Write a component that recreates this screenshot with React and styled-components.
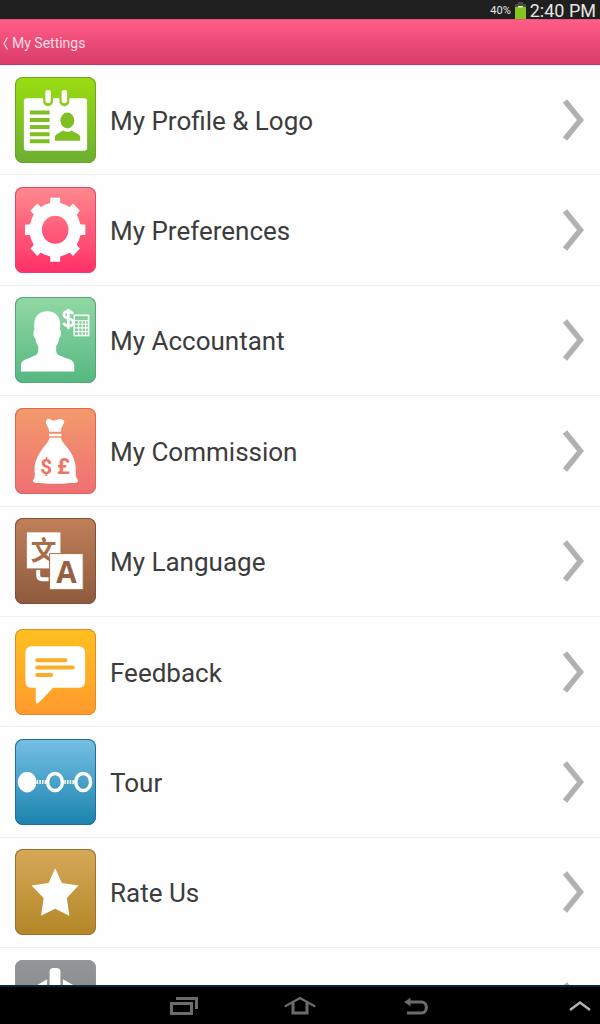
import styled, { createGlobalStyle } from "styled-components";

const GlobalStyle = createGlobalStyle`
  * {
    box-sizing: border-box;
  }
  body {
    margin: 0;
    background: #fefefe;
    font-family: Roboto, "Liberation Sans", sans-serif;
  }
`;

const Screen = styled.div`
  display: flex;
  flex-direction: column;
  height: 100vh;
`;

const StatusBar = styled.div`
  flex: none;
  display: flex;
  align-items: center;
  justify-content: flex-end;
  gap: 4px;
  height: 19px;
  padding: 2px 4px 0 0;
  background: #1f1f1f;
  color: #e6e6e6;
`;

const BatteryText = styled.span`
  font-size: 11px;
`;

const Clock = styled.time`
  font-size: 18px;
  line-height: 18px;
`;

const Header = styled.header`
  flex: none;
  display: flex;
  align-items: center;
  height: 46px;
  border-top: 1px solid #e0567c;
  border-bottom: 1px solid #c9375f;
  background: linear-gradient(#ff5d88, #d83c67);
`;

const BackButton = styled.button`
  display: flex;
  align-items: center;
  gap: 4px;
  padding: 4px 3px 2px;
  border: none;
  background: transparent;
  color: #ffdbe6;
  font-family: inherit;
  font-size: 14px;
  cursor: pointer;
`;

const List = styled.ul`
  flex: 1;
  display: flex;
  flex-direction: column;
  min-height: 0;
  margin: 0;
  padding: 0;
  list-style: none;
  overflow-y: auto;
  scrollbar-width: none;
`;

const Item = styled.li`
  flex: 0 0 12%;
  display: flex;
  min-height: 96px;
  border-bottom: 1px solid #f0f0f0;
`;

const RowLink = styled.a`
  flex: 1;
  display: flex;
  align-items: center;
  gap: 14px;
  padding: 0 16px 0 15px;
  color: #3c3c3c;
  text-decoration: none;
`;

const Tile = styled.span`
  flex: none;
  display: flex;
  width: 81px;
  height: 86px;
  border-radius: 8px;
  overflow: hidden;
  background: linear-gradient(${(props) => props.$from}, ${(props) => props.$to});
  box-shadow: inset 0 0 0 1px ${(props) => props.$edge};
`;

const Label = styled.span`
  flex: 1;
  padding-top: 2px;
  font-size: 26px;
  line-height: 32px;
`;

const NavBar = styled.nav`
  flex: none;
  display: grid;
  grid-template-columns: 1fr auto 1fr;
  align-items: center;
  height: 39px;
  padding: 0 4px;
  border-top: 2px solid #0b2536;
  background: #000;
`;

const NavGroup = styled.div`
  grid-column: 2;
  display: flex;
  gap: 84px;
`;

const NavButton = styled.button`
  display: flex;
  justify-content: center;
  width: 32px;
  padding: 0;
  border: none;
  background: transparent;
  color: ${(props) => props.$color || "#6c6c6c"};
  cursor: pointer;
`;

const ExpandButton = styled(NavButton)`
  grid-column: 3;
  justify-self: end;
`;

const Glyph = ({ children }) => (
  <svg width="82" height="87" viewBox="0 0 82 87" aria-hidden="true">
    {children}
  </svg>
);

const ProfileGlyph = () => (
  <Glyph>
    <rect x="9" y="21" width="64" height="53" rx="3" fill="#fff" />
    <path d="M28.5 20v4a5 5 0 0 0 10 0v-4zM45 20v4a5 5 0 0 0 10 0v-4z" fill="#8ccd18" />
    <rect x="30.7" y="12.5" width="5.6" height="13.5" rx="2.5" fill="#fff" />
    <rect x="47.2" y="12.5" width="5.6" height="13.5" rx="2.5" fill="#fff" />
    <path d="M15 35.5h20M15 43h20M15 50h20M15 57.5h20M15 64.5h20" stroke="#7fbf24" strokeWidth="4" />
    <ellipse cx="53" cy="43.500" rx="7" ry="8" fill="#7fbf24" />
    <path d="M40.5 64v-4c0-3 5-4 8-6.5q4.500 3 9 0c3 2.500 8.500 3.500 8.500 6.500v4z" fill="#7fbf24" />
  </Glyph>
);

const GearGlyph = () => (
  <Glyph>
    <g transform="translate(40.7 42.7) scale(1 1.06)">
      {[0, 45, 90, 135, 180, 225, 270, 315].map((angle) => (
        <path key={angle} d="M-7.5-22-5-26v-4.500H5v4.500l2.500 4z" fill="#fff" transform={`rotate(${angle})`} />
      ))}
      <circle r="19.7" fill="none" stroke="#fff" strokeWidth="12.5" />
    </g>
  </Glyph>
);

const AccountantGlyph = () => (
  <Glyph>
    <path
      d="M32.7 14c8 0 13 5 13 13v6c1.5 1 1 7-1 8-.5 4-1.5 6-3 8v5c0 4 4 5 9 7 6 2 9 3 9.3 8V75H6v-6c.3-5 4-6 9-8 5-2 8.500-3 8.500-7v-5c-1.500-2-2.500-4-3-8-2-1-2.500-7-1-8v-6c0-8 5-13 13.200-13z"
      fill="#fff"
    />
    <path
      d="M58.5 16.5c-1-1.800-2.600-2.500-4.500-2.500-2.700 0-4.500 1.300-4.500 3.500 0 5 9.500 2.500 9.500 7.500 0 2.300-2 3.700-4.800 3.700-2.400 0-4.200-1-5.200-3M54 11.500v20"
      fill="none"
      stroke="#fff"
      strokeWidth="2.8"
    />
    <rect x="60" y="18" width="14.5" height="20.5" fill="none" stroke="#fff" strokeWidth="1.6" />
    <path d="M61 23.5h13M61 27h13M61 30.7h13M61 34.5h13M64.5 23v15M68 23v15M71.5 23v15" stroke="#fff" strokeWidth="1.1" />
  </Glyph>
);

const GlyphText = styled.text`
  font-family: ${(props) => props.$font || "Roboto"}, sans-serif;
  font-size: ${(props) => props.$size}px;
  font-weight: 700;
  text-anchor: middle;
  fill: ${(props) => props.$fill};
`;

const MoneyBagGlyph = () => (
  <Glyph>
    <path d="M34.500 23.500c0-4-3-7-3.300-9.500.500-2.500 2-4 3.500-3.500 2 1 3.500 1.700 5 1.500 2.500 0 4-1.700 5.800-1.500 2.500 0 4 1 4.500 2.500-.500 3-3.500 6-3.500 10.500z" fill="#fff" />
    <path d="M34.5 26.7h12.5" stroke="#fff" strokeWidth="2.5" />
    <path
      d="M35 29.5h11.500c1 5 6 8 10 15 3.500 6 5.500 13 5 18-.300 4 0 7 2.500 10.500-1 2.500-4.500 2.500-8 2.300-10 1.200-20 1.200-30 0-3.500.200-7 .200-8-2.300 3-3.500 2-7 1.800-10.500-.400-6 1.500-12 5.500-18 4-7 8.700-10 9.700-15z"
      fill="#fff"
    />
    <GlyphText x="31.500" y="66" $size={21} $fill="#ee7564">$</GlyphText>
    <GlyphText x="49" y="66" $size={22} $fill="#ee7564">£</GlyphText>
  </Glyph>
);

const LanguageGlyph = () => (
  <Glyph>
    <rect x="12" y="14" width="34" height="36.5" fill="#fff" />
    <path d="M23.5 52v5.500q0 4 4 4H34" fill="none" stroke="#fff" strokeWidth="4" />
    <GlyphText x="29" y="42" $font={'"Noto Sans CJK SC"'} $size={26} $fill="#a86c48">文</GlyphText>
    <rect x="35" y="35.5" width="34" height="36.5" fill="#fff" stroke="#a86c48" strokeWidth="1" />
    <GlyphText x="52" y="65" $font={'"Open Sans"'} $size={30} $fill="#99603f">A</GlyphText>
  </Glyph>
);

const FeedbackGlyph = () => (
  <Glyph>
    <path
      d="M17 17h47q7 0 7 7v28q0 7-7 7H38.5L24 74q-3 2-3-1.500V59h-4q-6.500 0-6.500-7V24q0-7 6.500-7z"
      fill="#fff"
    />
    <path d="M22.5 31H51M22.5 38.5H58.5M22.5 46H36.5" stroke="#fdac26" strokeWidth="4" strokeLinecap="round" />
  </Glyph>
);

const TourGlyph = () => (
  <Glyph>
    <ellipse cx="12.3" cy="43" rx="9.5" ry="10.5" fill="#fff" />
    <path d="M22 43h11M50 43h11" stroke="#fff" strokeWidth="4" strokeDasharray="1.5 1.2" />
    <g fill="none" stroke="#fff" strokeWidth="3.5">
      <ellipse cx="40.5" cy="43" rx="7.5" ry="8.7" />
      <ellipse cx="69" cy="43" rx="7.5" ry="8.7" />
    </g>
  </Glyph>
);

const StarGlyph = () => (
  <Glyph>
    <path
      d="M40.7 19 47.5 34 64.3 36.5 52.5 49 55 67 40.7 60 26.3 67 29 49 16.7 36.5 34 34z"
      fill="#fff"
    />
  </Glyph>
);

const MoreGlyph = () => (
  <Glyph>
    <rect x="35" y="7.5" width="11" height="60" rx="4" fill="#fff" />
    <path d="M32.5 19v40L20.5 52V26zM48.5 19v40L61 52V26z" fill="#fff" />
  </Glyph>
);

const Chevron = () => (
  <svg width="22" height="42" viewBox="0 0 22 42" aria-hidden="true">
    <path d="M3 2 18.5 21 3 40" fill="none" stroke="#b1b1b1" strokeWidth="5.5" />
  </svg>
);

const settings = [
  { id: "profile", label: "My Profile & Logo", glyph: ProfileGlyph, from: "#9add10", to: "#6cae32", edge: "#6da523" },
  { id: "preferences", label: "My Preferences", glyph: GearGlyph, from: "#ff8a8e", to: "#ff2f67", edge: "#e8436c" },
  { id: "accountant", label: "My Accountant", glyph: AccountantGlyph, from: "#92d8a4", to: "#55b881", edge: "#55a578" },
  { id: "commission", label: "My Commission", glyph: MoneyBagGlyph, from: "#f39b6b", to: "#ef6f73", edge: "#dd6657" },
  { id: "language", label: "My Language", glyph: LanguageGlyph, from: "#c08058", to: "#8d5a3d", edge: "#82503a" },
  { id: "feedback", label: "Feedback", glyph: FeedbackGlyph, from: "#ffc020", to: "#ff9a2d", edge: "#e08c26" },
  { id: "tour", label: "Tour", glyph: TourGlyph, from: "#76c0e4", to: "#1a83ae", edge: "#216f96" },
  { id: "rate", label: "Rate Us", glyph: StarGlyph, from: "#d6a858", to: "#b38727", edge: "#9c7229" },
  { id: "more", glyph: MoreGlyph, from: "#939598", to: "#808285", edge: "#939598" },
];

const SettingRow = ({ item }) => {
  const Icon = item.glyph;
  return (
    <Item>
      <RowLink href={`#${item.id}`} aria-label={item.label ? undefined : "More"}>
        <Tile $from={item.from} $to={item.to} $edge={item.edge}>
          <Icon />
        </Tile>
        <Label>{item.label}</Label>
        <Chevron />
      </RowLink>
    </Item>
  );
};

const App = () => {
  return (
    <Screen>
      <GlobalStyle />
      <StatusBar>
        <BatteryText>40%</BatteryText>
        <svg width="11" height="17" viewBox="0 0 11 17" aria-hidden="true">
          <path d="M3 0h5v2h3v4H0V2h3z" fill="#4a4a4a" />
          <path d="M0 5h3V4h5v1h3v12H0z" fill="#84c41c" />
          <path d="M3 4h5v1.5H3z" fill="#e4f3c4" />
        </svg>
        <Clock>2:40 PM</Clock>
      </StatusBar>
      <Header>
        <BackButton type="button">
          <svg width="5" height="13" viewBox="0 0 5 13" aria-hidden="true">
            <path d="M4.5.5 1 6.500l3.500 6" fill="none" stroke="currentColor" strokeWidth="1.2" />
          </svg>
          My Settings
        </BackButton>
      </Header>
      <List>
        {settings.map((item) => (
          <SettingRow key={item.id} item={item} />
        ))}
      </List>
      <NavBar>
        <NavGroup>
          <NavButton type="button" aria-label="Recent apps">
            <svg width="30" height="20" viewBox="0 0 30 20" fill="none" stroke="currentColor" strokeWidth="3">
              <path d="M2.500 7.500h20v10h-20z" />
              <path d="M7 2.500h20.500v10.500" />
            </svg>
          </NavButton>
          <NavButton type="button" aria-label="Home">
            <svg width="32" height="20" viewBox="0 0 32 20" fill="none" stroke="currentColor" strokeWidth="3">
              <path d="M.8 10.500 16 2l15.200 8.500" strokeWidth="2.4" />
              <path d="M9 6.500V17h14V6.500" />
            </svg>
          </NavButton>
          <NavButton type="button" aria-label="Back">
            <svg width="26" height="20" viewBox="0 0 26 20" fill="none" stroke="currentColor" strokeWidth="3">
              <path d="M6 6h12.500c6.500 0 6.500 11 0 11H4" />
              <path d="M1 6 7.500 1.800v8.400z" fill="currentColor" stroke="none" />
            </svg>
          </NavButton>
        </NavGroup>
        <ExpandButton type="button" aria-label="Expand" $color="#b4b4b4">
          <svg width="22" height="20" viewBox="0 0 22 20" fill="none" stroke="currentColor" strokeWidth="2.4">
            <path d="M1 14 11 6.500l10 7.500" />
          </svg>
        </ExpandButton>
      </NavBar>
    </Screen>
  );
};

export default App;
